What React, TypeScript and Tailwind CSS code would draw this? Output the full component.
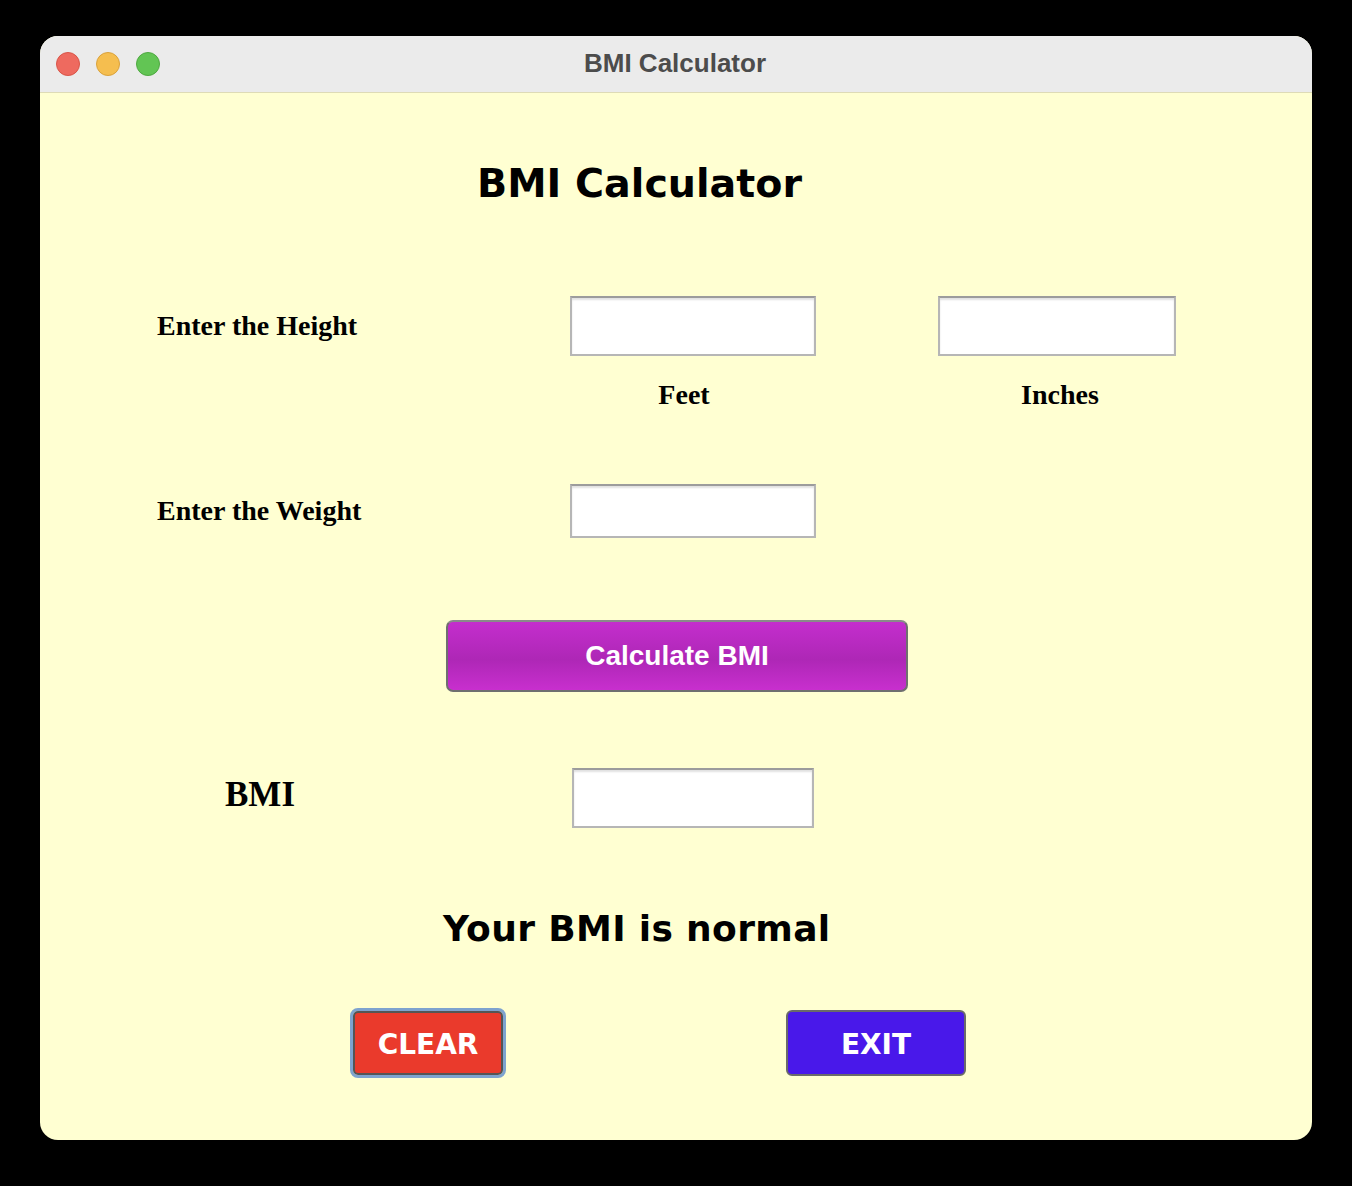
const serif = { fontFamily: '"Liberation Serif", "Times New Roman", serif' };

const Field = ({ w, h }: { w: number; h: number }) => (
  <input
    type="text"
    style={{ width: w, height: h }}
    className="bg-white border-2 border-[#b6b6b6] border-t-[#9c9c9c] shadow-[inset_0_2px_2px_rgba(0,0,0,0.12)] outline-none"
  />
);

const App = () => {
  return (
    <div className="w-[1352px] h-[1186px] bg-black pt-[36px] pl-[40px]">
      <div className="w-[1272px] h-[1104px] rounded-[18px] overflow-hidden bg-[#ffffd2] flex flex-col">
        {/* title bar */}
        <div className="h-[57px] bg-[#ebebeb] border-b border-[#dedbb6] grid grid-cols-[1fr_auto_1fr] items-center px-[16px]">
          <div className="flex gap-[16px]">
            <span className="w-[24px] h-[24px] rounded-full bg-[#ee6a5f] border border-[#d85548]" />
            <span className="w-[24px] h-[24px] rounded-full bg-[#f5be4f] border border-[#d9a23c]" />
            <span className="w-[24px] h-[24px] rounded-full bg-[#62c554] border border-[#4fa841]" />
          </div>
          <div className="font-['Liberation_Sans',Arial,sans-serif] font-bold text-[26px] text-[#4c4c4c] leading-none -translate-x-[1px] -translate-y-[1px]">
            BMI Calculator
          </div>
          <div />
        </div>

        {/* heading */}
        <div className="mt-[66px] h-[48px] pl-[437px] font-['DejaVu_Sans',Verdana,sans-serif] font-bold text-[39.6px] leading-[48px] text-black">
          BMI Calculator
        </div>

        {/* height row */}
        <div className="mt-[89px] h-[60px] flex items-center">
          <div style={serif} className="w-[530px] pl-[117px] font-bold text-[28px] text-black">
            Enter the Height
          </div>
          <Field w={246} h={60} />
          <div className="w-[122px]" />
          <Field w={238} h={60} />
        </div>

        {/* feet / inches */}
        <div style={serif} className="mt-[24px] h-[30px] flex items-center font-bold text-[28px] text-black">
          <div className="ml-[530px] w-[228px] text-center">Feet</div>
          <div className="ml-[140px] w-[244px] text-center">Inches</div>
        </div>

        {/* weight row */}
        <div className="mt-[74px] h-[54px] flex items-center">
          <div style={serif} className="w-[530px] pl-[117px] font-bold text-[28px] text-black">
            Enter the Weight
          </div>
          <Field w={246} h={54} />
        </div>

        {/* calculate */}
        <div className="mt-[82px] pl-[406px]">
          <button
            type="button"
            className="w-[462px] h-[72px] rounded-[7px] border-2 border-[#6f6f6f] border-t-[#8a8a8a] bg-[linear-gradient(to_bottom,#c42ecd,#ae27b6_55%,#c82fce)] text-white font-['Liberation_Sans',Arial,sans-serif] font-bold text-[28px]"
          >
            Calculate BMI
          </button>
        </div>

        {/* bmi row */}
        <div className="mt-[76px] h-[60px] flex items-center">
          <div style={serif} className="w-[532px] pl-[185px] pb-[6px] font-bold text-[35px] text-black">
            BMI
          </div>
          <Field w={242} h={60} />
        </div>

        {/* result */}
        <div className="mt-[81px] h-[40px] pl-[403px] font-['DejaVu_Sans',Verdana,sans-serif] font-bold text-[36px] tracking-[0.35px] leading-[40px] text-black">
          Your BMI is normal
        </div>

        {/* bottom buttons */}
        <div className="mt-[59px] h-[70px] flex items-center">
          <div className="ml-[310px] rounded-[8px] border-[3px] border-[#7ea3cf]">
            <button
              type="button"
              className="w-[150px] h-[64px] pt-[4px] rounded-[5px] border-2 border-[#555] bg-[#ea3a2c] text-white font-['DejaVu_Sans',Verdana,sans-serif] font-bold text-[28px]"
            >
              CLEAR
            </button>
          </div>
          <button
            type="button"
            className="ml-[280px] w-[180px] h-[66px] pt-[4px] rounded-[6px] border-2 border-[#6a6a6a] bg-[#4918ea] text-white font-['DejaVu_Sans',Verdana,sans-serif] font-bold text-[28px]"
          >
            EXIT
          </button>
        </div>
      </div>
    </div>
  );
};

export default App;
